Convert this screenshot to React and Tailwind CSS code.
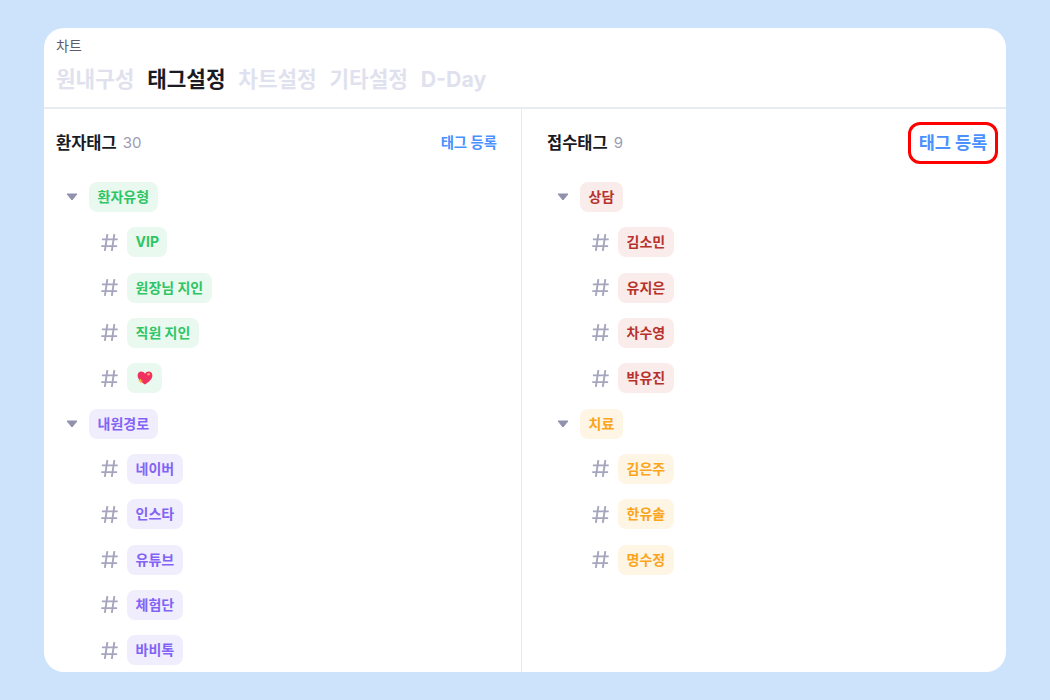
import React from "react";

const font = { green: "bg-[#e9f9ef] text-[#2fc565]", purple: "bg-[#f0eefd] text-[#8263f5]", red: "bg-[#faeceb] text-[#b8322c]", orange: "bg-[#fff5e4] text-[#fba51c]" };

const patientGroups = [
  { name: "환자유형", color: "green", tags: ["VIP", "원장님 지인", "직원 지인", "heart"] },
  { name: "내원경로", color: "purple", tags: ["네이버", "인스타", "유튜브", "체험단", "바비톡"] },
];

const receptionGroups = [
  { name: "상담", color: "red", tags: ["김소민", "유지은", "차수영", "박유진"] },
  { name: "치료", color: "orange", tags: ["김은주", "한유솔", "명수정"] },
];

const tabs = ["원내구성", "태그설정", "차트설정", "기타설정", "D-Day"];

const HeartIcon = () => (
  <svg width="18" height="18" viewBox="0 0 18 18" className="block">
    <path d="M9 15.5C5 12.6 1.6 10 1.6 6.4 1.6 4 3.4 2.6 5.2 2.6 6.8 2.6 8.2 3.4 9 4.8 9.8 3.4 11.2 2.6 12.8 2.6 14.6 2.6 16.4 4 16.4 6.4 16.4 10 13 12.6 9 15.5Z" fill="#f0305f" />
    <circle cx="12.6" cy="5.2" r="1.3" fill="#ff9a6b" />
    <path d="M4.6 9.2 5.3 11.2 7.2 11.9 5.3 12.6 4.6 14.6 3.9 12.6 2 11.9 3.9 11.2Z" fill="#fbb040" />
  </svg>
);

const HashIcon = () => (
  <svg width="17" height="19" viewBox="0 0 16 18" fill="none" stroke="#a5a5bd" strokeWidth="1.8" className="block">
    <path d="M6 1 3.6 17M12.6 1 10.2 17M0.8 6H15.8M0.2 12.4H15.2" />
  </svg>
);

const Caret = () => (
  <svg width="12" height="8" viewBox="0 0 12 8" className="block">
    <path d="M1 1H11L6 7Z" fill="#9291ad" stroke="#9291ad" strokeLinejoin="round" />
  </svg>
);

const Tag = ({ label, color }) => (
  <span className={`flex h-[30px] items-center rounded-[8px] px-[8.5px] text-[14px] font-bold leading-none ${font[color]}`}>
    {label === "heart" ? <HeartIcon /> : label}
  </span>
);

const Group = ({ group }) => (
  <>
    <div className="flex items-center gap-[11px] pl-[22px]">
      <Caret />
      <Tag label={group.name} color={group.color} />
    </div>
    {group.tags.map((tag) => (
      <div key={tag} className="flex items-center gap-[8px] pl-[56px]">
        <span className="flex w-[19px] justify-center"><HashIcon /></span>
        <Tag label={tag} color={group.color} />
      </div>
    ))}
  </>
);

const Column = ({ title, count, groups, highlighted, className }) => (
  <div className={`flex min-h-0 flex-col overflow-hidden ${className}`}>
    <div className="flex h-[42px] items-center justify-between">
      <div className="flex items-center gap-[6px]">
        <span className="text-[16.5px] font-bold text-[#1a1a24]">{title}</span>
        <span className="text-[15px] text-[#9c9cb4]">{count}</span>
      </div>
      {highlighted ? (
        <button className="mr-[8px] flex h-[42px] w-[90px] items-center justify-center rounded-[12px] border-[3px] border-[#ff0000] text-[17.5px] font-bold text-[#4b90ff]">
          태그 등록
        </button>
      ) : (
        <button className="mr-[24px] text-[14.4px] font-bold text-[#4b90ff]">태그 등록</button>
      )}
    </div>
    <div className="mt-[18px] flex flex-col gap-[15.33px]">
      {groups.map((group) => (
        <Group key={group.name} group={group} />
      ))}
    </div>
  </div>
);

export default function App() {
  return (
    <div
      className="flex h-[700px] w-[1050px] bg-[#cde2fb] pb-[28px] pl-[44px] pr-[44px] pt-[28px]"
      style={{ fontFamily: '"Inter", "Noto Sans CJK KR", sans-serif' }}
    >
      <div className="flex w-full flex-col overflow-hidden rounded-[20px] bg-white">
        <div className="h-[81px] shrink-0 border-b-2 border-[#e9ebf3] pl-[12px] pt-[10px]">
          <div className="text-[14px] leading-[16px] text-[#5b5b6b]">차트</div>
          <div className="mt-[10px] flex gap-[12.8px]">
            {tabs.map((tab) => (
              <span
                key={tab}
                className={`text-[21.3px] font-bold leading-[30px] ${tab === "태그설정" ? "text-[#1a1a24]" : "text-[#dfe2ee]"}`}
              >
                {tab}
              </span>
            ))}
          </div>
        </div>
        <div className="flex min-h-0 flex-1">
          <Column
            title="환자태그"
            count="30"
            groups={patientGroups}
            className="w-[478px] border-r border-[#e9ebf3] pl-[12px] pt-[13px] [&>div:last-child]:-ml-[12px]"
          />
          <Column
            title="접수태그"
            count="9"
            groups={receptionGroups}
            highlighted
            className="flex-1 pl-[25px] pt-[13px] [&>div:last-child]:-ml-[12px]"
          />
        </div>
      </div>
    </div>
  );
}
